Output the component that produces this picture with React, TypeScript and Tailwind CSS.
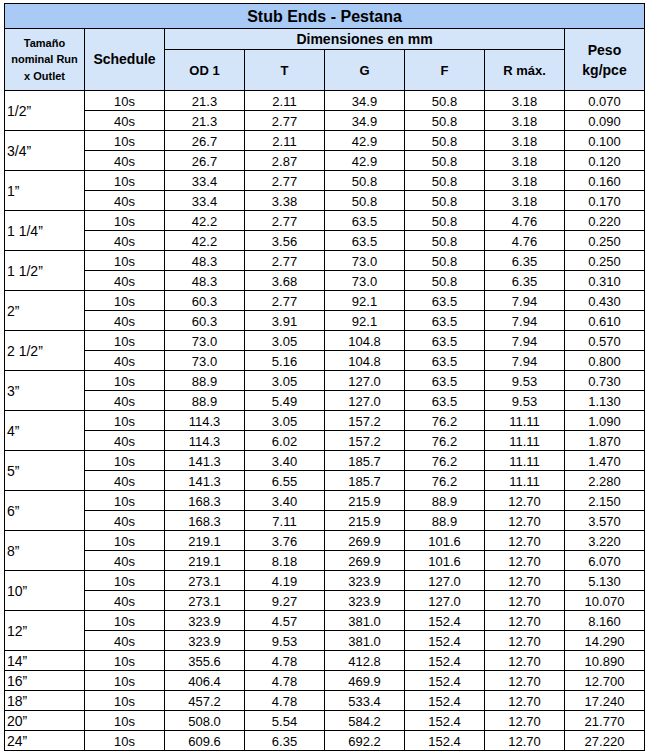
const ROWS: [string, string[][]][] = [
  ['1/2”', [['10s', '21.3', '2.11', '34.9', '50.8', '3.18', '0.070'], ['40s', '21.3', '2.77', '34.9', '50.8', '3.18', '0.090']]],
  ['3/4”', [['10s', '26.7', '2.11', '42.9', '50.8', '3.18', '0.100'], ['40s', '26.7', '2.87', '42.9', '50.8', '3.18', '0.120']]],
  ['1”', [['10s', '33.4', '2.77', '50.8', '50.8', '3.18', '0.160'], ['40s', '33.4', '3.38', '50.8', '50.8', '3.18', '0.170']]],
  ['1 1/4”', [['10s', '42.2', '2.77', '63.5', '50.8', '4.76', '0.220'], ['40s', '42.2', '3.56', '63.5', '50.8', '4.76', '0.250']]],
  ['1 1/2”', [['10s', '48.3', '2.77', '73.0', '50.8', '6.35', '0.250'], ['40s', '48.3', '3.68', '73.0', '50.8', '6.35', '0.310']]],
  ['2”', [['10s', '60.3', '2.77', '92.1', '63.5', '7.94', '0.430'], ['40s', '60.3', '3.91', '92.1', '63.5', '7.94', '0.610']]],
  ['2 1/2”', [['10s', '73.0', '3.05', '104.8', '63.5', '7.94', '0.570'], ['40s', '73.0', '5.16', '104.8', '63.5', '7.94', '0.800']]],
  ['3”', [['10s', '88.9', '3.05', '127.0', '63.5', '9.53', '0.730'], ['40s', '88.9', '5.49', '127.0', '63.5', '9.53', '1.130']]],
  ['4”', [['10s', '114.3', '3.05', '157.2', '76.2', '11.11', '1.090'], ['40s', '114.3', '6.02', '157.2', '76.2', '11.11', '1.870']]],
  ['5”', [['10s', '141.3', '3.40', '185.7', '76.2', '11.11', '1.470'], ['40s', '141.3', '6.55', '185.7', '76.2', '11.11', '2.280']]],
  ['6”', [['10s', '168.3', '3.40', '215.9', '88.9', '12.70', '2.150'], ['40s', '168.3', '7.11', '215.9', '88.9', '12.70', '3.570']]],
  ['8”', [['10s', '219.1', '3.76', '269.9', '101.6', '12.70', '3.220'], ['40s', '219.1', '8.18', '269.9', '101.6', '12.70', '6.070']]],
  ['10”', [['10s', '273.1', '4.19', '323.9', '127.0', '12.70', '5.130'], ['40s', '273.1', '9.27', '323.9', '127.0', '12.70', '10.070']]],
  ['12”', [['10s', '323.9', '4.57', '381.0', '152.4', '12.70', '8.160'], ['40s', '323.9', '9.53', '381.0', '152.4', '12.70', '14.290']]],
  ['14”', [['10s', '355.6', '4.78', '412.8', '152.4', '12.70', '10.890']]],
  ['16”', [['10s', '406.4', '4.78', '469.9', '152.4', '12.70', '12.700']]],
  ['18”', [['10s', '457.2', '4.78', '533.4', '152.4', '12.70', '17.240']]],
  ['20”', [['10s', '508.0', '5.54', '584.2', '152.4', '12.70', '21.770']]],
  ['24”', [['10s', '609.6', '6.35', '692.2', '152.4', '12.70', '27.220']]],
];

const head = 'bg-[#d5e5f9] font-bold flex items-center justify-center text-center';
const cell = 'bg-white text-center leading-[19px] pt-px';

export default function App() {
  return (
    <div className="min-h-screen bg-white pt-[3px] pl-[4px] text-black text-[13px] font-['Liberation_Sans',Arial,sans-serif]">
      <div className="grid w-fit grid-cols-[repeat(8,79px)] grid-rows-[24px_20px_40px_repeat(33,19px)] gap-px bg-black p-px">
        {/* header */}
        <div className="col-span-8 bg-[#a8caf4] font-bold text-[16px] flex items-center justify-center pt-px">
          Stub Ends - Pestana
        </div>
        <div className={`${head} row-span-2 text-[11px] leading-[16.5px]`}>
          Tamaño<br />nominal Run<br />x Outlet
        </div>
        <div className={`${head} row-span-2 text-[14px]`}>Schedule</div>
        <div className={`${head} col-span-5 text-[14px]`}>Dimensiones en mm</div>
        <div className={`${head} row-span-2 text-[14px] leading-[20px]`}>
          Peso<br />kg/pce
        </div>
        <div className={`${head} text-[13px] pt-px`}>OD 1</div>
        <div className={`${head} text-[13px] pt-px`}>T</div>
        <div className={`${head} text-[13px] pt-px`}>G</div>
        <div className={`${head} text-[13px] pt-px`}>F</div>
        <div className={`${head} text-[13px] pt-px`}>R máx.</div>

        {/* data */}
        {ROWS.map(([size, rows]) => (
          <>
            <div
              key={size}
              className={`bg-white flex items-center pl-[2px] pt-px text-[14px] ${rows.length === 2 ? 'row-span-2' : ''}`}
            >
              {size}
            </div>
            {rows.map((r, i) =>
              r.map((v, j) => (
                <div key={`${size}-${i}-${j}`} className={cell}>{v}</div>
              ))
            )}
          </>
        ))}
      </div>
    </div>
  );
}
